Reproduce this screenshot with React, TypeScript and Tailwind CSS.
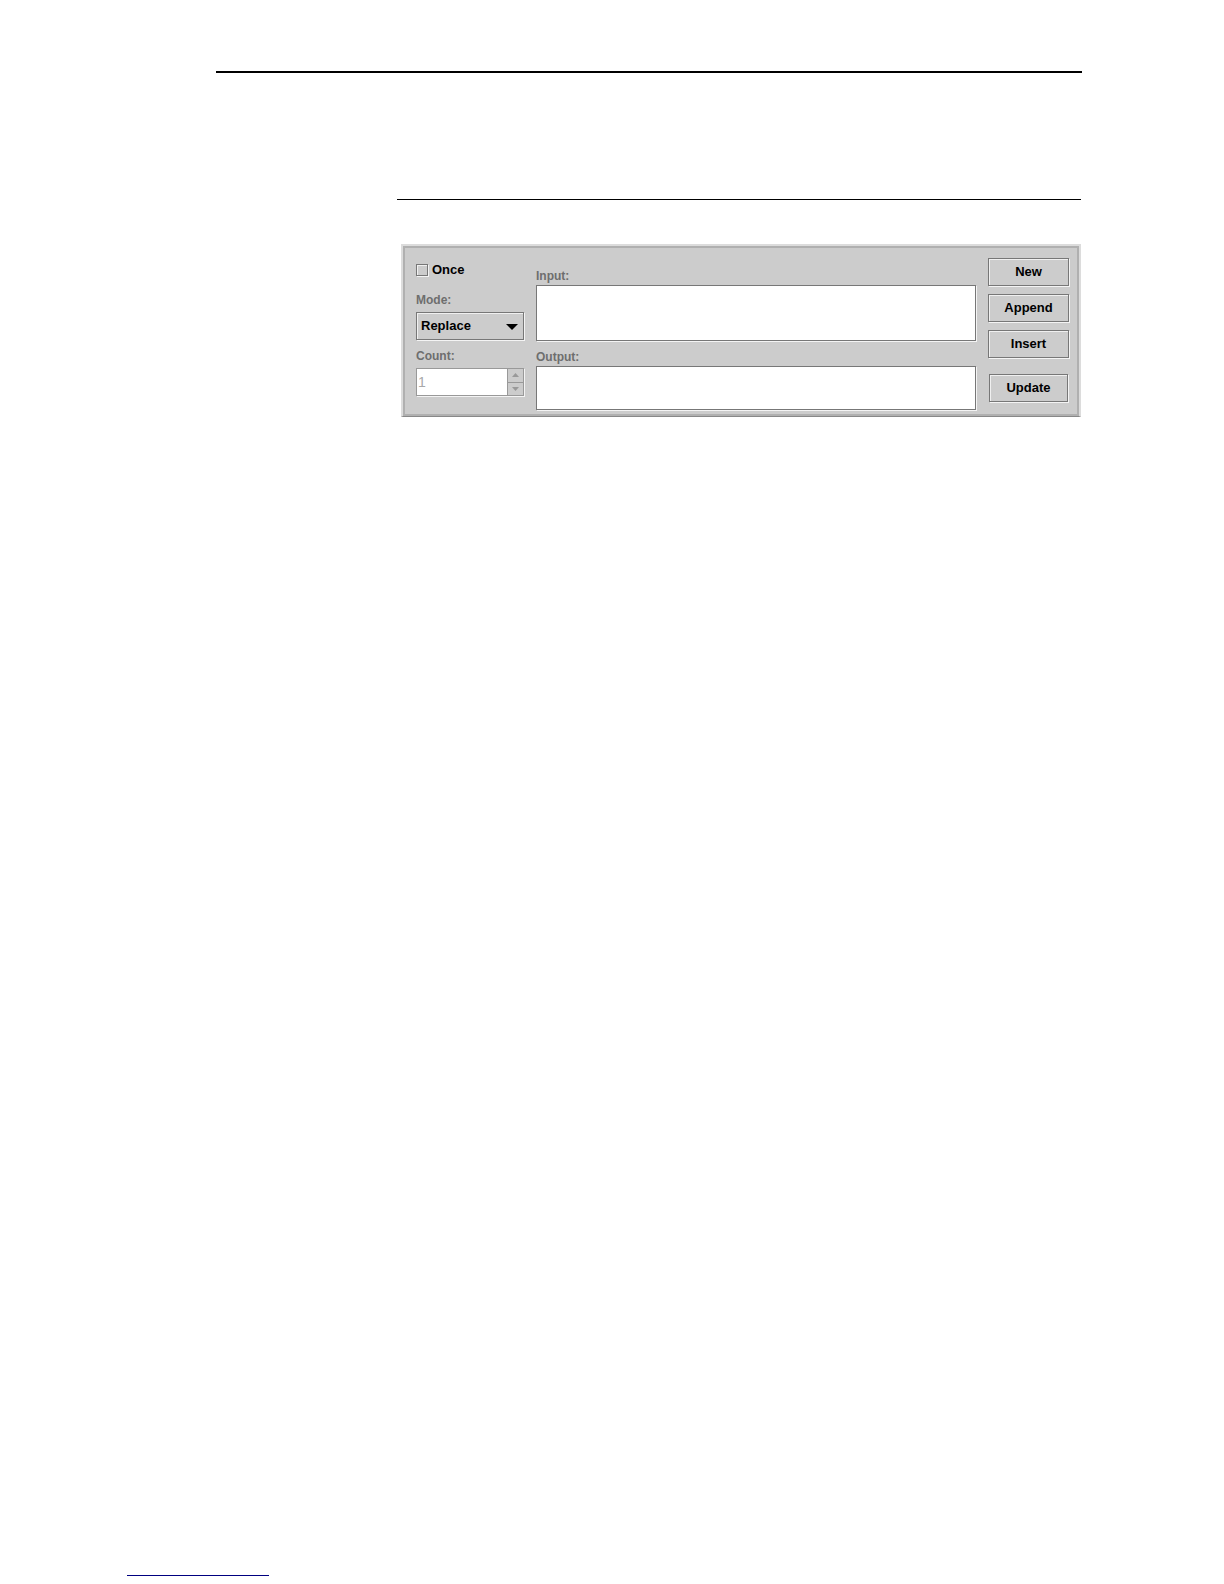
import { useState } from "react";
import type { ReactNode } from "react";
import clsx from "clsx";

type FieldProps = {
  id: string;
  label: string;
  className: string;
};

const labelStyle = "block text-xs leading-4 font-bold text-[#6e6e6e]";

// sunken edge: grey outline with a white highlight to the lower right
const edge = "border border-[#777777] shadow-[1px_1px_0_#f4f4f4]";

const Field = ({ id, label, className }: FieldProps) => (
  <div>
    <label htmlFor={id} className={labelStyle}>
      {label}
    </label>
    <textarea
      id={id}
      className={clsx(
        "block w-full mt-px px-1 text-[13px] bg-white resize-none outline-none",
        edge,
        className
      )}
    />
  </div>
);

const PanelButton = ({ children }: { children: ReactNode }) => (
  <button
    type="button"
    className={clsx(
      "h-7 text-[13px] leading-4 font-bold text-black bg-[#cccccc] inset-shadow-[1px_1px_0_#f0f0f0]",
      edge
    )}
  >
    {children}
  </button>
);

const EditorPanel = () => {
  const [once, setOnce] = useState(false);
  const [mode, setMode] = useState("Replace");

  return (
    <form className="border-2 border-[#dcdcdc] border-b-[#888888] border-b bg-[#cccccc]">
      <div className="grid grid-cols-[108px_1fr_81px] gap-x-3 border-2 border-[#b0b0b0] pl-[11px] pr-2 pt-1 pb-1">
        <div className="pt-2">
          <label className="flex items-center gap-1 h-5 text-[13px] font-bold text-black">
            <input
              type="checkbox"
              checked={once}
              onChange={(e) => setOnce(e.target.checked)}
              className={clsx(
                "appearance-none size-3 bg-[#cccccc] checked:bg-[#777777] inset-shadow-[1px_1px_0_#f0f0f0]",
                edge
              )}
            />
            Once
          </label>
          <label htmlFor="mode" className={clsx(labelStyle, "mt-3")}>
            Mode:
          </label>
          <div className="relative mt-1">
            <select
              id="mode"
              value={mode}
              onChange={(e) => setMode(e.target.value)}
              className={clsx(
                "block appearance-none w-full h-7 px-1 text-[13px] font-bold text-black bg-[#cccccc] inset-shadow-[1px_1px_0_#f0f0f0] outline-none",
                edge
              )}
            >
              <option>Replace</option>
            </select>
            <svg
              viewBox="0 0 12 6"
              className="absolute right-1.5 top-3 w-3 h-1.5 pointer-events-none"
            >
              <path d="M0 0h12L6 6z" fill="#000" />
            </svg>
          </div>
          <label htmlFor="count" className={clsx(labelStyle, "mt-2")}>
            Count:
          </label>
          <div className="flex h-7 mt-1 border border-[#999999] shadow-[1px_1px_0_#f4f4f4]">
            <input
              id="count"
              type="text"
              defaultValue="1"
              disabled
              className="min-w-0 flex-1 px-px text-sm text-[#a8a8a8] bg-white"
            />
            <div className="flex flex-col w-4 border-l border-[#999999]">
              <button
                type="button"
                disabled
                aria-label="Increase count"
                className="flex flex-1 items-center justify-center border-b border-[#999999]"
              >
                <svg viewBox="0 0 7 4" className="w-[7px] h-1">
                  <path d="M0 4h7L3.500 0z" fill="#999999" />
                </svg>
              </button>
              <button
                type="button"
                disabled
                aria-label="Decrease count"
                className="flex flex-1 items-center justify-center"
              >
                <svg viewBox="0 0 7 4" className="w-[7px] h-1">
                  <path d="M0 0h7L3.500 4z" fill="#999999" />
                </svg>
              </button>
            </div>
          </div>
        </div>

        <div className="flex flex-col gap-2 pt-4">
          <Field id="input" label="Input:" className="h-14" />
          <Field id="output" label="Output:" className="h-11" />
        </div>

        <div className="flex flex-col gap-2 pt-1.5">
          <PanelButton>New</PanelButton>
          <PanelButton>Append</PanelButton>
          <PanelButton>Insert</PanelButton>
          <div className="flex flex-col mt-2 px-px">
            <PanelButton>Update</PanelButton>
          </div>
        </div>
      </div>
    </form>
  );
};

export default function App() {
  return (
    <div className="flex flex-col min-h-screen bg-white font-['Liberation_Sans',Arial,sans-serif]">
      <main className="pt-[71px] pl-[216px] pr-[142px]">
        <hr className="border-t-2 border-black" />
        <section className="mt-[126px] ml-[181px] mr-px">
          <hr className="border-t border-black" />
          <div className="mt-11 ml-1">
            <EditorPanel />
          </div>
        </section>
      </main>
      <footer className="mt-auto pb-2 pl-[127px]">
        <hr className="w-[142px] border-t border-[#000080]" />
      </footer>
    </div>
  );
}
